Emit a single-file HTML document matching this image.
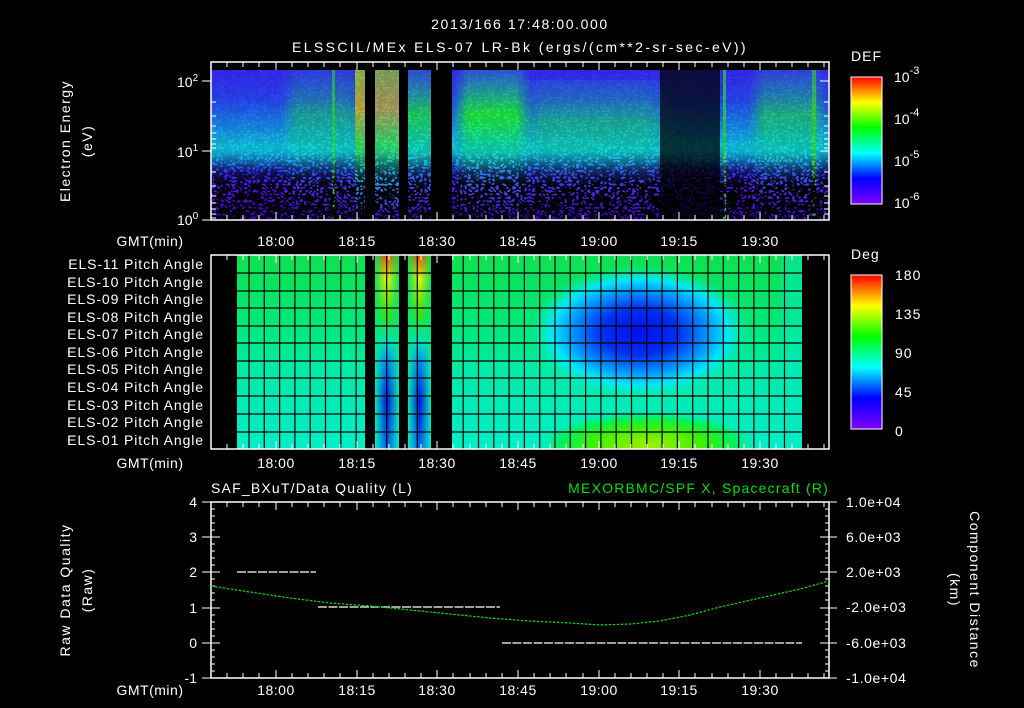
<!DOCTYPE html>
<html><head><meta charset="utf-8"><style>
html,body{margin:0;padding:0;background:#000;}
svg{display:block}
text{font-family:"Liberation Sans",sans-serif;fill:#fff;font-size:14px}
</style></head><body>
<svg width="1024" height="708" viewBox="0 0 1024 708" xmlns="http://www.w3.org/2000/svg">
<defs>
<clipPath id="c2"><rect x="211" y="255" width="618" height="194"/></clipPath>
<clipPath id="c1"><rect x="211" y="70" width="618" height="150"/></clipPath>
<linearGradient id="rb" x1="0" y1="1" x2="0" y2="0">
<stop offset="0" stop-color="#8000ff"/><stop offset="0.2" stop-color="#0000ff"/><stop offset="0.4" stop-color="#00ffff"/><stop offset="0.6" stop-color="#00ff00"/><stop offset="0.8" stop-color="#ffff00"/><stop offset="1" stop-color="#ff0000"/></linearGradient>
<linearGradient id="spec" x1="0" y1="0" x2="0" y2="1">
<stop offset="0" stop-color="#3828f8"/><stop offset="0.2" stop-color="#2848f8"/><stop offset="0.38" stop-color="#1890f0"/><stop offset="0.52" stop-color="#10d0e8"/><stop offset="0.6" stop-color="#18a0f0"/><stop offset="0.68" stop-color="#3030f0"/><stop offset="0.8" stop-color="#5010e8"/><stop offset="1" stop-color="#3800b0"/></linearGradient>
<linearGradient id="grn" x1="0" y1="0" x2="0" y2="1">
<stop offset="0" stop-color="#20d0a0" stop-opacity="0.3"/><stop offset="0.3" stop-color="#20f040"/><stop offset="0.5" stop-color="#10e0b0"/><stop offset="0.7" stop-color="#20e0e0" stop-opacity="0.4"/><stop offset="1" stop-color="#20e0e0" stop-opacity="0"/></linearGradient>
<linearGradient id="hot" x1="0" y1="0" x2="0" y2="1">
<stop offset="0" stop-color="#a0e020"/><stop offset="0.25" stop-color="#f0c020"/><stop offset="0.5" stop-color="#40f040"/><stop offset="0.75" stop-color="#10c0e0"/><stop offset="1" stop-color="#10c0e0" stop-opacity="0"/></linearGradient>
<linearGradient id="fadeH" x1="0" y1="0" x2="1" y2="0">
<stop offset="0" stop-color="#fff" stop-opacity="0"/><stop offset="0.2" stop-color="#fff"/><stop offset="0.8" stop-color="#fff"/><stop offset="1" stop-color="#fff" stop-opacity="0"/></linearGradient>
<mask id="fh1"><rect x="452" y="70" width="80" height="150" fill="url(#fadeH)"/></mask>
<mask id="fh2"><rect x="510" y="70" width="170" height="150" fill="url(#fadeH)"/></mask>
<mask id="fh3"><rect x="748" y="70" width="81" height="150" fill="url(#fadeH)"/></mask>
<mask id="fh4"><rect x="280" y="70" width="85" height="150" fill="url(#fadeH)"/></mask>
<linearGradient id="strip" x1="0" y1="0" x2="0" y2="1">
<stop offset="0" stop-color="#ff4000"/><stop offset="0.12" stop-color="#f0f000"/><stop offset="0.3" stop-color="#40e000"/><stop offset="0.45" stop-color="#00e0d0"/><stop offset="0.55" stop-color="#0080ff"/><stop offset="0.75" stop-color="#0010e0"/><stop offset="1" stop-color="#0060f0"/></linearGradient>
<linearGradient id="stripH" x1="0" y1="0" x2="1" y2="0">
<stop offset="0" stop-color="#fff" stop-opacity="0"/><stop offset="0.5" stop-color="#fff" stop-opacity="1"/><stop offset="1" stop-color="#fff" stop-opacity="0"/></linearGradient>
<mask id="sm1"><rect x="375" y="255" width="24" height="194" fill="url(#stripH)"/></mask>
<mask id="sm2"><rect x="408" y="255" width="23" height="194" fill="url(#stripH)"/></mask>
<linearGradient id="pa" x1="0" y1="0" x2="0" y2="1">
<stop offset="0" stop-color="#10e050"/><stop offset="0.35" stop-color="#00e878"/><stop offset="0.6" stop-color="#00eaa8"/><stop offset="1" stop-color="#00eec8"/></linearGradient>
<radialGradient id="blue" cx="0.5" cy="0.5" r="0.5">
<stop offset="0" stop-color="#0010f0"/><stop offset="0.35" stop-color="#0030f0"/><stop offset="0.6" stop-color="#0090ff"/><stop offset="0.8" stop-color="#00e8f8"/><stop offset="1" stop-color="#00f0c0" stop-opacity="0"/></radialGradient>
<radialGradient id="yg" cx="0.5" cy="0.5" r="0.5">
<stop offset="0" stop-color="#a0f000"/><stop offset="0.5" stop-color="#40f000"/><stop offset="0.8" stop-color="#00f060"/><stop offset="1" stop-color="#00f0a0" stop-opacity="0"/></radialGradient>
<filter id="spk" x="0" y="0" width="1" height="1"><feTurbulence type="turbulence" baseFrequency="0.25 0.3" numOctaves="1" seed="7"/><feColorMatrix type="matrix" values="0 0 0 0 0  0 0 0 0 0  0 0 0 0 0  -9 0 0 0 2.6"/></filter>
<linearGradient id="spkg" x1="0" y1="0" x2="0" y2="1"><stop offset="0" stop-color="#fff" stop-opacity="0.1"/><stop offset="0.55" stop-color="#fff" stop-opacity="0.15"/><stop offset="0.78" stop-color="#fff" stop-opacity="1"/><stop offset="1" stop-color="#fff" stop-opacity="1"/></linearGradient>
<mask id="spm"><rect x="211" y="70" width="618" height="150" fill="url(#spkg)"/></mask>
</defs>

<text x="520" y="29" text-anchor="middle" font-size="17" letter-spacing="1.6">2013/166 17:48:00.000</text>
<text x="520" y="52" text-anchor="middle" font-size="17" letter-spacing="2.4">ELSSCIL/MEx ELS-07 LR-Bk  (ergs/(cm**2-sr-sec-eV))</text>

<g clip-path="url(#c1)">
<rect x="211" y="70" width="618" height="150" fill="url(#spec)"/>
<rect x="280" y="70" width="85" height="150" fill="url(#grn)" opacity="0.45" mask="url(#fh4)"/>
<rect x="452" y="70" width="80" height="150" fill="url(#grn)" mask="url(#fh1)"/>
<rect x="510" y="80" width="170" height="140" fill="url(#grn)" opacity="0.45" mask="url(#fh2)"/>
<rect x="748" y="70" width="81" height="150" fill="url(#grn)" opacity="0.6" mask="url(#fh3)"/>
<rect x="355" y="70" width="10" height="150" fill="url(#hot)" opacity="0.8"/>
<rect x="375" y="70" width="24" height="150" fill="url(#hot)" opacity="0.7"/>
<rect x="408" y="70" width="23" height="150" fill="url(#grn)" opacity="0.8"/>
<rect x="332" y="70" width="3" height="150" fill="#30f020" opacity="0.6"/>
<rect x="723" y="70" width="3" height="150" fill="#30f030" opacity="0.7"/>
<rect x="812" y="70" width="4" height="150" fill="#40f020" opacity="0.6"/>
<rect x="660" y="70" width="60" height="150" fill="#000" opacity="0.72"/>
<rect x="211" y="70" width="618" height="150" fill="#000" filter="url(#spk)" mask="url(#spm)"/>
</g>
<rect x="365" y="70" width="10" height="150" fill="#000"/>
<rect x="399" y="70" width="9" height="150" fill="#000"/>
<rect x="431" y="70" width="21" height="150" fill="#000"/>
<rect x="211" y="62" width="618" height="158" fill="none" stroke="#fff" stroke-width="1.5"/>

<text transform="translate(70,141) rotate(-90)" text-anchor="middle" font-size="15" letter-spacing="1.5">Electron Energy</text>
<text transform="translate(92,141) rotate(-90)" text-anchor="middle" font-size="15" letter-spacing="1.5">(eV)</text>
<text x="177" y="87" font-size="14">10<tspan dy="-6" font-size="10">2</tspan></text>
<text x="177" y="157" font-size="14">10<tspan dy="-6" font-size="10">1</tspan></text>
<text x="177" y="225" font-size="14">10<tspan dy="-6" font-size="10">0</tspan></text>
<g stroke="#fff" stroke-width="1">
<line x1="202" y1="81" x2="211" y2="81"/><line x1="202" y1="151" x2="211" y2="151"/><line x1="202" y1="220" x2="211" y2="220"/>
<path d="M211 102h5M211 116h5M211 126h5M211 133h5M211 139h5M211 144h5M211 148h5M211 172h5M211 186h5M211 196h5M211 203h5M211 209h5M211 214h5M211 218h5"/>
<path d="M829 81h-9M829 151h-9M829 102h-5M829 116h-5M829 126h-5M829 133h-5M829 139h-5M829 144h-5M829 148h-5M829 172h-5M829 186h-5M829 196h-5M829 203h-5M829 209h-5M829 214h-5"/>
</g>

<text x="851" y="61" font-size="16" letter-spacing="1">DEF</text>
<rect x="851" y="77" width="31" height="127" fill="url(#rb)" stroke="#fff"/>
<text x="894" y="82" font-size="16">10<tspan dy="-8" font-size="11">-3</tspan></text>
<text x="894" y="124" font-size="16">10<tspan dy="-8" font-size="11">-4</tspan></text>
<text x="894" y="166" font-size="16">10<tspan dy="-8" font-size="11">-5</tspan></text>
<text x="894" y="208" font-size="16">10<tspan dy="-8" font-size="11">-6</tspan></text>

<g clip-path="url(#c2)">
<rect x="237" y="255" width="565" height="194" fill="url(#pa)"/>
<ellipse cx="640" cy="332" rx="110" ry="66" fill="url(#blue)"/>
<ellipse cx="648" cy="445" rx="110" ry="34" fill="url(#yg)"/>
<rect x="782" y="255" width="20" height="194" fill="#00eac0" opacity="0.5"/>
<rect x="375" y="255" width="24" height="194" fill="url(#strip)" mask="url(#sm1)"/>
<rect x="408" y="255" width="23" height="194" fill="url(#strip)" mask="url(#sm2)"/>
<rect x="365" y="255" width="10" height="194" fill="#000"/>
<rect x="399" y="255" width="9" height="194" fill="#000"/>
<rect x="431" y="255" width="21" height="194" fill="#000"/>
<rect x="802" y="255" width="27" height="194" fill="#000"/>
</g>
<g stroke="#000" stroke-width="1.2">
<line x1="211" y1="273" x2="829" y2="273"/><line x1="211" y1="291" x2="829" y2="291"/><line x1="211" y1="308" x2="829" y2="308"/><line x1="211" y1="326" x2="829" y2="326"/><line x1="211" y1="343" x2="829" y2="343"/><line x1="211" y1="361" x2="829" y2="361"/><line x1="211" y1="378" x2="829" y2="378"/><line x1="211" y1="396" x2="829" y2="396"/><line x1="211" y1="414" x2="829" y2="414"/><line x1="211" y1="432" x2="829" y2="432"/>
</g>
<g stroke="#000" stroke-width="1.2">
<line x1="249" y1="255" x2="249" y2="449"/><line x1="264.3" y1="255" x2="264.3" y2="449"/><line x1="279.6" y1="255" x2="279.6" y2="449"/><line x1="294.9" y1="255" x2="294.9" y2="449"/><line x1="310.2" y1="255" x2="310.2" y2="449"/><line x1="325.5" y1="255" x2="325.5" y2="449"/><line x1="340.8" y1="255" x2="340.8" y2="449"/><line x1="356.1" y1="255" x2="356.1" y2="449"/><line x1="386.7" y1="255" x2="386.7" y2="449"/><line x1="417.3" y1="255" x2="417.3" y2="449"/><line x1="463.2" y1="255" x2="463.2" y2="449"/><line x1="478.5" y1="255" x2="478.5" y2="449"/><line x1="493.8" y1="255" x2="493.8" y2="449"/><line x1="509.1" y1="255" x2="509.1" y2="449"/><line x1="524.4" y1="255" x2="524.4" y2="449"/><line x1="539.7" y1="255" x2="539.7" y2="449"/><line x1="555" y1="255" x2="555" y2="449"/><line x1="570.3" y1="255" x2="570.3" y2="449"/><line x1="585.6" y1="255" x2="585.6" y2="449"/><line x1="600.9" y1="255" x2="600.9" y2="449"/><line x1="616.2" y1="255" x2="616.2" y2="449"/><line x1="631.5" y1="255" x2="631.5" y2="449"/><line x1="646.8" y1="255" x2="646.8" y2="449"/><line x1="662.1" y1="255" x2="662.1" y2="449"/><line x1="677.4" y1="255" x2="677.4" y2="449"/><line x1="692.7" y1="255" x2="692.7" y2="449"/><line x1="708" y1="255" x2="708" y2="449"/><line x1="723.3" y1="255" x2="723.3" y2="449"/><line x1="738.6" y1="255" x2="738.6" y2="449"/><line x1="753.9" y1="255" x2="753.9" y2="449"/><line x1="769.2" y1="255" x2="769.2" y2="449"/><line x1="784.5" y1="255" x2="784.5" y2="449"/>
</g>
<rect x="211" y="255" width="618" height="194" fill="none" stroke="#fff" stroke-width="1.5"/>
<g font-size="13" text-anchor="end" letter-spacing="0.9">
<text x="204" y="269">ELS-11 Pitch Angle</text>
<text x="204" y="287">ELS-10 Pitch Angle</text>
<text x="204" y="304">ELS-09 Pitch Angle</text>
<text x="204" y="322">ELS-08 Pitch Angle</text>
<text x="204" y="339">ELS-07 Pitch Angle</text>
<text x="204" y="357">ELS-06 Pitch Angle</text>
<text x="204" y="374">ELS-05 Pitch Angle</text>
<text x="204" y="392">ELS-04 Pitch Angle</text>
<text x="204" y="410">ELS-03 Pitch Angle</text>
<text x="204" y="427">ELS-02 Pitch Angle</text>
<text x="204" y="445">ELS-01 Pitch Angle</text>
</g>

<text x="851" y="259" font-size="16" letter-spacing="1">Deg</text>
<rect x="851" y="275" width="31" height="154" fill="url(#rb)" stroke="#fff"/>
<text x="895" y="280" font-size="16" letter-spacing="1">180</text>
<text x="895" y="319" font-size="16" letter-spacing="1">135</text>
<text x="895" y="358" font-size="16" letter-spacing="1">90</text>
<text x="895" y="397" font-size="16" letter-spacing="1">45</text>
<text x="895" y="436" font-size="16" letter-spacing="1">0</text>

<g font-size="14" text-anchor="middle" letter-spacing="0.5">
<text x="150" y="246">GMT(min)</text><text x="276" y="246">18:00</text><text x="357" y="246">18:15</text><text x="437" y="246">18:30</text><text x="518" y="246">18:45</text><text x="599" y="246">19:00</text><text x="679" y="246">19:15</text><text x="760" y="246">19:30</text>
<text x="150" y="468">GMT(min)</text><text x="276" y="468">18:00</text><text x="357" y="468">18:15</text><text x="437" y="468">18:30</text><text x="518" y="468">18:45</text><text x="599" y="468">19:00</text><text x="679" y="468">19:15</text><text x="760" y="468">19:30</text>
<text x="150" y="695">GMT(min)</text><text x="276" y="695">18:00</text><text x="357" y="695">18:15</text><text x="437" y="695">18:30</text><text x="518" y="695">18:45</text><text x="599" y="695">19:00</text><text x="679" y="695">19:15</text><text x="760" y="695">19:30</text>
</g>

<g stroke="#fff" stroke-width="1">
<path d="M227 62v5M243 62v5M259 62v5M276 62v8M292 62v5M308 62v5M324 62v5M340 62v5M357 62v8M373 62v5M389 62v5M405 62v5M421 62v5M437 62v8M453 62v5M470 62v5M486 62v5M502 62v5M518 62v8M534 62v5M550 62v5M566 62v5M583 62v5M599 62v8M615 62v5M631 62v5M647 62v5M663 62v5M679 62v8M695 62v5M712 62v5M728 62v5M744 62v5M760 62v8M776 62v5M792 62v5M808 62v5M824 62v5"/>
<path d="M227 220v-5M243 220v-5M259 220v-5M276 220v-8M292 220v-5M308 220v-5M324 220v-5M340 220v-5M357 220v-8M373 220v-5M389 220v-5M405 220v-5M421 220v-5M437 220v-8M453 220v-5M470 220v-5M486 220v-5M502 220v-5M518 220v-8M534 220v-5M550 220v-5M566 220v-5M583 220v-5M599 220v-8M615 220v-5M631 220v-5M647 220v-5M663 220v-5M679 220v-8M695 220v-5M712 220v-5M728 220v-5M744 220v-5M760 220v-8M776 220v-5M792 220v-5M808 220v-5M824 220v-5"/>
<path d="M227 255v5M243 255v5M259 255v5M276 255v8M292 255v5M308 255v5M324 255v5M340 255v5M357 255v8M373 255v5M389 255v5M405 255v5M421 255v5M437 255v8M453 255v5M470 255v5M486 255v5M502 255v5M518 255v8M534 255v5M550 255v5M566 255v5M583 255v5M599 255v8M615 255v5M631 255v5M647 255v5M663 255v5M679 255v8M695 255v5M712 255v5M728 255v5M744 255v5M760 255v8M776 255v5M792 255v5M808 255v5M824 255v5"/>
<path d="M227 449v-5M243 449v-5M259 449v-5M276 449v-8M292 449v-5M308 449v-5M324 449v-5M340 449v-5M357 449v-8M373 449v-5M389 449v-5M405 449v-5M421 449v-5M437 449v-8M453 449v-5M470 449v-5M486 449v-5M502 449v-5M518 449v-8M534 449v-5M550 449v-5M566 449v-5M583 449v-5M599 449v-8M615 449v-5M631 449v-5M647 449v-5M663 449v-5M679 449v-8M695 449v-5M712 449v-5M728 449v-5M744 449v-5M760 449v-8M776 449v-5M792 449v-5M808 449v-5M824 449v-5"/>
<path d="M227 502v5M243 502v5M259 502v5M276 502v8M292 502v5M308 502v5M324 502v5M340 502v5M357 502v8M373 502v5M389 502v5M405 502v5M421 502v5M437 502v8M453 502v5M470 502v5M486 502v5M502 502v5M518 502v8M534 502v5M550 502v5M566 502v5M583 502v5M599 502v8M615 502v5M631 502v5M647 502v5M663 502v5M679 502v8M695 502v5M712 502v5M728 502v5M744 502v5M760 502v8M776 502v5M792 502v5M808 502v5M824 502v5"/>
<path d="M227 678v-5M243 678v-5M259 678v-5M276 678v-8M292 678v-5M308 678v-5M324 678v-5M340 678v-5M357 678v-8M373 678v-5M389 678v-5M405 678v-5M421 678v-5M437 678v-8M453 678v-5M470 678v-5M486 678v-5M502 678v-5M518 678v-8M534 678v-5M550 678v-5M566 678v-5M583 678v-5M599 678v-8M615 678v-5M631 678v-5M647 678v-5M663 678v-5M679 678v-8M695 678v-5M712 678v-5M728 678v-5M744 678v-5M760 678v-8M776 678v-5M792 678v-5M808 678v-5M824 678v-5"/>
<path d="M202 502h18M202 537h18M202 572h18M202 608h18M202 643h18M202 678h18M211 509h4M211 516h4M211 523h4M211 530h4M211 544h4M211 551h4M211 558h4M211 565h4M211 579h4M211 586h4M211 593h4M211 600h4M211 615h4M211 622h4M211 629h4M211 636h4M211 650h4M211 657h4M211 664h4M211 671h4"/>
<path d="M820 502h17M820 537h17M820 572h17M820 608h17M820 643h17M820 678h17M829 509h-4M829 516h-4M829 523h-4M829 530h-4M829 544h-4M829 551h-4M829 558h-4M829 565h-4M829 579h-4M829 586h-4M829 593h-4M829 600h-4M829 615h-4M829 622h-4M829 629h-4M829 636h-4M829 650h-4M829 657h-4M829 664h-4M829 671h-4"/>
</g>

<text x="211" y="493" font-size="15" letter-spacing="1.2">SAF_BXuT/Data Quality (L)</text>
<text x="829" y="493" font-size="15" letter-spacing="1.2" text-anchor="end" style="fill:#00e000">MEXORBMC/SPF X, Spacecraft (R)</text>
<rect x="211" y="502" width="618" height="176" fill="none" stroke="#fff" stroke-width="1.5"/>
<g font-size="14" text-anchor="end">
<text x="197" y="507">4</text><text x="197" y="542">3</text><text x="197" y="577">2</text><text x="197" y="613">1</text><text x="197" y="648">0</text><text x="197" y="683">-1</text>
</g>
<g font-size="13" letter-spacing="0.6">
<text x="846" y="507">1.0e+04</text><text x="846" y="542">6.0e+03</text><text x="846" y="577">2.0e+03</text><text x="846" y="612">-2.0e+03</text><text x="846" y="648">-6.0e+03</text><text x="846" y="683">-1.0e+04</text>
</g>
<text transform="translate(70,590) rotate(-90)" text-anchor="middle" font-size="15" letter-spacing="1.5">Raw Data Quality</text>
<text transform="translate(92,590) rotate(-90)" text-anchor="middle" font-size="15" letter-spacing="1.5">(Raw)</text>
<text transform="translate(970,590) rotate(90)" text-anchor="middle" font-size="15" letter-spacing="1.5">Component Distance</text>
<text transform="translate(950,590) rotate(90)" text-anchor="middle" font-size="15" letter-spacing="1.5">(km)</text>
<g stroke="#fff" stroke-width="1.2" stroke-dasharray="9,1.5">
<line x1="237" y1="572" x2="316" y2="572"/>
<line x1="318" y1="607" x2="500" y2="607"/>
<line x1="502" y1="643" x2="802" y2="643"/>
</g>
<path d="M211 586 L250 592 L290 598 L330 603 L370 606 L410 610 L450 614 L490 618 L530 621 L570 623 L600 625 L630 624 L660 621 L690 615 L720 607 L760 598 L800 589 L829 581" fill="none" stroke="#00e000" stroke-width="1.2" stroke-dasharray="2.5,1.5"/>
</svg>
</body></html>
